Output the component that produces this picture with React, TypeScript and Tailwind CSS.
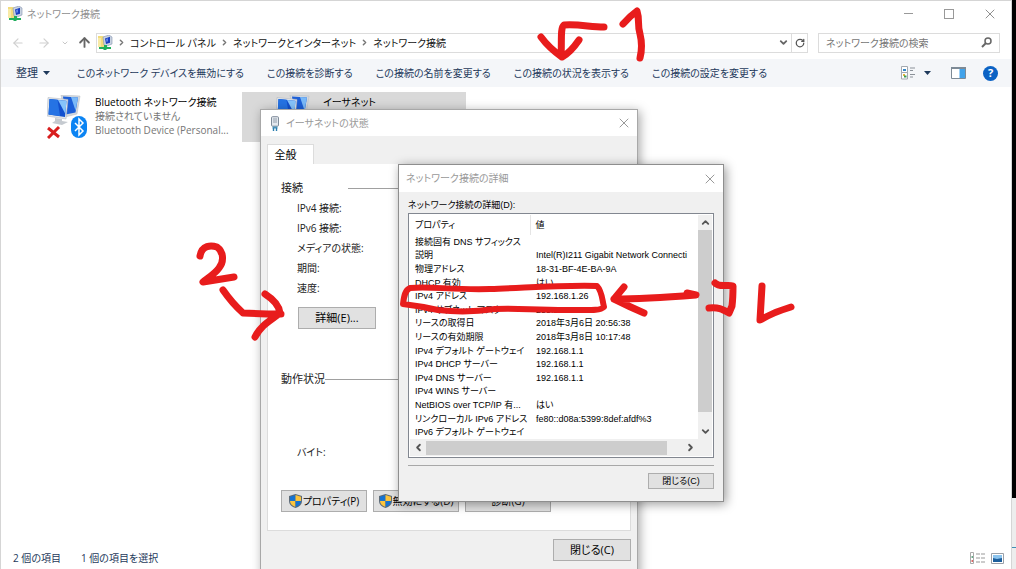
import type { ReactNode } from 'react';
import { ArrowLeft, ArrowRight, ArrowUp, ChevronDown, ChevronLeft, ChevronRight, ChevronUp, RotateCw, X } from 'lucide-react';

const commands = [
  'このネットワーク デバイスを無効にする',
  'この接続を診断する',
  'この接続の名前を変更する',
  'この接続の状況を表示する',
  'この接続の設定を変更する',
];

const crumbs = ['コントロール パネル', 'ネットワークとインターネット', 'ネットワーク接続'];

const statusRows = ['IPv4 接続:', 'IPv6 接続:', 'メディアの状態:', '期間:', '速度:'];

const details = [
  { name: '接続固有 DNS サフィックス', value: '' },
  { name: '説明', value: 'Intel(R)I211 Gigabit Network Connecti' },
  { name: '物理アドレス', value: '18-31-BF-4E-BA-9A' },
  { name: 'DHCP 有効', value: 'はい' },
  { name: 'IPv4 アドレス', value: '192.168.1.26' },
  { name: 'IPv4 サブネット マスク', value: '255.255.255.0' },
  { name: 'リースの取得日', value: '2018年3月6日 20:56:38' },
  { name: 'リースの有効期限', value: '2018年3月8日 10:17:48' },
  { name: 'IPv4 デフォルト ゲートウェイ', value: '192.168.1.1' },
  { name: 'IPv4 DHCP サーバー', value: '192.168.1.1' },
  { name: 'IPv4 DNS サーバー', value: '192.168.1.1' },
  { name: 'IPv4 WINS サーバー', value: '' },
  { name: 'NetBIOS over TCP/IP 有...', value: 'はい' },
  { name: 'リンクローカル IPv6 アドレス', value: 'fe80::d08a:5399:8def:afdf%3' },
  { name: 'IPv6 デフォルト ゲートウェイ', value: '' },
];

function NetworkIcon() {
  return (
    <svg width="15" height="15" viewBox="0 0 15 15" className="shrink-0" aria-hidden="true">
      <path d="M0 1h5l1 1h3v10H0z" fill="#f2dc7c" />
      <path d="M0 3h3v9H0z" fill="#f8eaa6" />
      <path d="M5 2l6-2 3 2v7l-5 2-3-1z" fill="#c9d3e2" stroke="#8391ac" strokeWidth=".6" />
      <path d="M7 3.500l5-1.700v6L8 9z" fill="#1b3fc0" />
      <path d="M8 4l2-.7v3L8.500 7z" fill="#5f86ee" />
      <path d="M6 10h3v2h4v2H9l-1 1H6l-1-1H1v-2h5z" fill="#1fae5c" />
    </svg>
  );
}

function Computers() {
  return (
    <>
      <path d="M14 0l19 1-3 18-12 3z" fill="#d3d8de" stroke="#b4bac2" strokeWidth=".5" />
      <path d="M16 1.500l15 1-2.500 15-10 2z" fill="#1c5fd8" />
      <path d="M24 2l7 .5-2.500 13z" fill="#7ab9f8" />
      <path d="M1 2.500l20 2-2 19.500L0 21z" fill="#e2e6ea" stroke="#aab1ba" strokeWidth=".5" />
      <path d="M2.500 4l17 1.700L18 22 1.500 19.500z" fill="#1250cf" />
      <path d="M2.500 4l8 .8L13 21 1.500 19.500z" fill="#2573e4" />
      <path d="M11 5l8.500.700-1.200 13z" fill="#86c4fb" />
      <path d="M8 23l7 1v2l6 1-6 3-10-2 3-2z" fill="#c5cad0" />
    </>
  );
}

function BluetoothNetworkIcon() {
  return (
    <svg width="42" height="44" viewBox="0 0 42 44" className="shrink-0" aria-hidden="true">
      <Computers />
      <rect x="24" y="21" width="16" height="22" rx="8" fill="#0b84f3" />
      <path d="M28 28l8 8-4 4V24l4 4-8 8" fill="none" stroke="#fff" strokeWidth="1.500" />
      <path d="M1 33l11 9M12 32L1 43" stroke="#d81e1e" strokeWidth="3" />
    </svg>
  );
}

function EthernetIcon() {
  return (
    <svg width="42" height="44" viewBox="0 0 42 44" className="shrink-0" aria-hidden="true">
      <Computers />
    </svg>
  );
}

function PlugIcon() {
  return (
    <svg width="10" height="15" viewBox="0 0 10 15" className="shrink-0" aria-hidden="true">
      <rect x="1.500" y=".7" width="7" height="9.500" rx="1" fill="#e3e8ee" stroke="#7f8b99" />
      <path d="M4 2v5M6 2v5" stroke="#7f8b99" strokeWidth=".8" />
      <path d="M2.500 10.500h5v2h-5z" fill="#4a90b8" />
      <path d="M3.500 12v3M6.500 12v3" stroke="#2b7fb0" strokeWidth="1.400" />
    </svg>
  );
}

function Shield() {
  return (
    <svg width="13" height="14" viewBox="0 0 13 14" className="shrink-0" aria-hidden="true">
      <path d="M6.500 0L13 2v5c0 3.500-3 6-6.500 7C3 13 0 10.500 0 7V2z" fill="#5d6b78" />
      <path d="M6.500 1L1 2.700V7h5.500z" fill="#1673d1" />
      <path d="M6.500 1L12 2.700V7H6.500z" fill="#fcc43c" />
      <path d="M1 7h5.500v6C3.500 12 1 10 1 7z" fill="#fcc43c" />
      <path d="M12 7H6.500v6C9.500 12 12 10 12 7z" fill="#1673d1" />
    </svg>
  );
}

function ViewIcon() {
  return (
    <svg width="15" height="14" viewBox="0 0 15 14" aria-hidden="true">
      <path d="M.5.5h6v6h-6zM.5 6.500h6v6.500h-6z" fill="#fff" stroke="#a3a9b0" />
      <path d="M2 3h3v2H2z" fill="#3286c8" />
      <path d="M2 8h2v2H2z" fill="#e3b53a" />
      <path d="M3 9.500h2.500v2H3z" fill="#3a9c55" />
      <path d="M9 2h5M9 4.500h3M9 8.500h5M9 11h3" stroke="#8b9199" />
    </svg>
  );
}

function PaneIcon() {
  return (
    <svg width="15" height="12" viewBox="0 0 15 12" aria-hidden="true">
      <path d="M.5.5h14v11H.5z" fill="#fff" stroke="#7d8a96" />
      <path d="M0 0h15v2H0z" fill="#7d8a96" />
      <path d="M8.500 2H14v9H8.500z" fill="#41a2ea" />
    </svg>
  );
}

function Caret() {
  return (
    <svg width="7" height="4" viewBox="0 0 7 4" aria-hidden="true">
      <path d="M0 0h7L3.500 4z" fill="#1e395b" />
    </svg>
  );
}

function PushButton({ children, className }: { children: ReactNode; className: string }) {
  return (
    <button className={`flex items-center justify-center whitespace-nowrap border border-[#adadad] bg-[#e1e1e1] text-black ${className}`}>
      {children}
    </button>
  );
}

function Explorer() {
  return (
    <main className="flex min-w-0 flex-1 flex-col border-l border-t border-r border-[#d5d5d5] bg-white">
      <header className="flex h-[25px] items-center pl-[7px] pr-2 text-[#8f8f8f]">
        <NetworkIcon />
        <h1 className="ml-1 flex-1">ネットワーク接続</h1>
        <div className="flex gap-[27px] pr-[6px]">
          <button aria-label="最小化" className="flex w-[14px] items-center justify-center">
            <span className="h-px w-[9px] bg-[#999]"></span>
          </button>
          <button aria-label="最大化" className="flex w-[14px] items-center justify-center">
            <span className="size-[10px] border border-[#999]"></span>
          </button>
          <button aria-label="閉じる" className="flex w-[14px] items-center justify-center">
            <X size={16} strokeWidth={1.5} className="shrink-0" />
          </button>
        </div>
      </header>

      <div className="flex h-8 items-center pl-[10px] pr-[11px] pt-px">
        <button aria-label="戻る" className="text-[#d0d0d0]"><ArrowLeft size={14} strokeWidth={2} /></button>
        <button aria-label="進む" className="ml-3 text-[#d0d0d0]"><ArrowRight size={14} strokeWidth={2} /></button>
        <button aria-label="履歴" className="ml-[10px] text-[#c8c8c8]"><ChevronDown size={8} strokeWidth={3} /></button>
        <button aria-label="上へ" className="ml-[8px] text-[#666]"><ArrowUp size={15} strokeWidth={3} /></button>
        <nav className="ml-1 flex h-5 flex-1 items-center border border-[#dcdcdc] pl-px text-[#111]">
          <NetworkIcon />
          {crumbs.map((c) => (
            <span key={c} className="flex items-center">
              <ChevronRight size={9} strokeWidth={4} className="mx-[4px] text-[#777]" />
              <a href="#">{c}</a>
            </span>
          ))}
          <button aria-label="以前の場所" className="ml-auto mr-[2px] text-[#666]"><ChevronDown size={11} strokeWidth={4} /></button>
          <button aria-label="更新" className="flex h-full w-4 items-center justify-center border-l border-[#dcdcdc] text-[#555]">
            <RotateCw size={10} strokeWidth={3} />
          </button>
        </nav>
        <label className="ml-[10px] flex h-5 w-[182px] items-center border border-[#dcdcdc] px-[7px]">
          <input aria-label="ネットワーク接続の検索" placeholder="ネットワーク接続の検索" className="min-w-0 flex-1 outline-none placeholder:text-[#767676]" />
          <svg width="11" height="11" viewBox="0 0 11 11" aria-hidden="true">
            <circle cx="7" cy="4" r="3" fill="none" stroke="#666" strokeWidth="1.500" />
            <path d="M5 6L1 10" stroke="#666" strokeWidth="2" />
          </svg>
        </label>
      </div>

      <div className="mt-px flex h-7 items-center gap-[23px] bg-[#f4f6f9] pl-[15px] pr-[13px] text-[#1e395b]">
        <button className="mr-1 flex items-center gap-[5px] whitespace-nowrap text-[11px]">整理 <Caret /></button>
        {commands.map((c) => (
          <button key={c} className="whitespace-nowrap">{c}</button>
        ))}
        <div className="ml-auto flex items-center">
          <button aria-label="表示方法の変更"><ViewIcon /></button>
          <button aria-label="その他のオプション" className="ml-2"><Caret /></button>
          <button aria-label="プレビュー ウィンドウ" className="ml-5"><PaneIcon /></button>
          <button aria-label="ヘルプ" className="ml-[17px] flex size-[15px] items-center justify-center rounded-full bg-[#0b62c4] text-[11px] font-bold text-white">?</button>
        </div>
      </div>

      <ul className="flex flex-1 items-start gap-[6px] pl-[11px] pt-[5px]">
        <li className="flex h-[50px] w-[224px] gap-[6px] pl-[35px] pt-[3px]">
          <BluetoothNetworkIcon />
          <div className="leading-[14px] text-[#767676]">
            <p className="text-black">Bluetooth ネットワーク接続</p>
            <p>接続されていません</p>
            <p className="whitespace-nowrap">Bluetooth Device (Personal...</p>
          </div>
        </li>
        <li className="flex h-[50px] w-[224px] gap-[5px] bg-[#d9d9d9] pl-[34px] pt-[3px]">
          <EthernetIcon />
          <p className="leading-[14px] text-black">イーサネット</p>
        </li>
      </ul>

      <footer className="flex h-[22px] items-center pl-3 pr-[7px] text-[#1e395b]">
        <span>2 個の項目</span>
        <span className="ml-5">1 個の項目を選択</span>
        <div className="ml-auto flex items-center gap-[5px]">
          <button aria-label="詳細表示">
            <svg width="16" height="12" viewBox="0 0 16 12" aria-hidden="true">
              <path d="M.5.5h3v11h-3z" fill="#fff" stroke="#aaa" />
              <path d="M6 2h4M11 2h4M6 6h4M11 6h4M6 10h4M11 10h4" stroke="#999" />
              <path d="M1.500 8h1.500v2H1.500z" fill="#d66" />
              <path d="M1.500 4h1.500v2H1.500z" fill="#6a8" />
            </svg>
          </button>
          <button aria-label="大きい縮小表示">
            <svg width="13" height="11" viewBox="0 0 13 11" aria-hidden="true">
              <path d="M.5.5h12v10H.5z" fill="#fff" stroke="#9aa0a8" />
              <path d="M2 2h9v7H2z" fill="#8cc4ee" />
              <path d="M2 5l4 1 5-1v4H2z" fill="#1d5f9c" />
            </svg>
          </button>
        </div>
      </footer>
    </main>
  );
}

function StatusDialog() {
  return (
    <section className="absolute left-[260px] top-[109px] w-[378px] border border-[#a8a8a8] bg-[#f0f0f0] pb-5 text-[11px] text-[#222] shadow-[2px_2px_10px_rgba(0,0,0,0.35)]">
      <header className="flex h-[26px] items-center bg-white pl-[9px] pr-[5px] text-[10px] text-[#999]">
        <PlugIcon />
        <h2 className="ml-[6px] flex-1">イーサネットの状態</h2>
        <button aria-label="閉じる"><X size={16} strokeWidth={1.5} /></button>
      </header>
      <div className="px-[6px] pt-2">
        <button role="tab" aria-selected="true" className="block h-5 w-[47px] border border-b-0 border-[#dcdcdc] bg-white pr-[10px] text-black">全般</button>
        <div className="flex h-[367px] flex-col border border-t-0 border-[#dcdcdc] bg-white px-[13px]">
          <div className="mt-4 flex h-4 items-center">
            <h3 className="w-[67px]">接続</h3>
            <span className="h-px flex-1 bg-[#a0a0a0]"></span>
          </div>
          <ul className="mt-[2px] pl-4 leading-5 text-[10px]">
            {statusRows.map((r) => (
              <li key={r} className="h-5">{r}</li>
            ))}
          </ul>
          <PushButton className="ml-[17px] mt-[9px] h-[22px] w-[78px]">詳細(E)...</PushButton>
          <div className="mt-[42px] flex h-4 items-center">
            <h3>動作状況</h3>
            <span className="h-px flex-1 bg-[#a0a0a0]"></span>
          </div>
          <p className="mt-[57px] h-4 pl-4 text-[10px] leading-4">バイト:</p>
          <div className="mt-[30px] flex gap-[6px] text-[10px]">
            <PushButton className="h-[22px] w-[86px] gap-px"><Shield />プロパティ(P)</PushButton>
            <PushButton className="h-[22px] w-[86px] gap-px"><Shield />無効にする(D)</PushButton>
            <PushButton className="h-[22px] w-[86px]">診断(G)</PushButton>
          </div>
        </div>
        <div className="mt-2 flex justify-end">
          <PushButton className="h-[22px] w-[78px]">閉じる(C)</PushButton>
        </div>
      </div>
    </section>
  );
}

function DetailsDialog() {
  return (
    <section className="absolute left-[398px] top-[164px] w-[326px] border border-[#8e8e8e] bg-[#f0f0f0] pb-3 font-['Liberation_Sans','Noto_Sans_CJK_JP',sans-serif] text-[9px] text-black shadow-[2px_2px_10px_rgba(0,0,0,0.4)]">
      <header className="flex h-[27px] items-center bg-white pl-[7px] pr-[5px] text-[10px] text-[#999]">
        <h2 className="flex-1">ネットワーク接続の詳細</h2>
        <button aria-label="閉じる"><X size={16} strokeWidth={1.5} /></button>
      </header>
      <div className="px-[9px] pt-[6px]">
        <p className="h-[15px] leading-[15px]">ネットワーク接続の詳細(D):</p>
        <div className="h-[245px] border border-[#828790] bg-white p-px">
          <div className="flex">
            <div className="min-w-0 flex-1 overflow-hidden">
              <table className="w-full table-fixed border-collapse text-left leading-3">
                <thead>
                  <tr className="h-5">
                    <th className="w-[120px] border-r border-[#e5e5e5] p-0 pl-[5px] font-normal">プロパティ</th>
                    <th className="p-0 pl-[5px] font-normal">値</th>
                  </tr>
                </thead>
              </table>
              <table className="h-[204px] w-full table-fixed border-collapse text-left leading-3">
                <tbody>
                  {details.map((d) => (
                    <tr key={d.name}>
                      <td className="w-[121px] whitespace-nowrap p-0 pl-[5px]">{d.name}</td>
                      <td className="whitespace-nowrap p-0 pl-[5px]">{d.value}</td>
                    </tr>
                  ))}
                </tbody>
              </table>
            </div>
            <div className="flex w-[14px] flex-col items-center bg-[#f0f0f0] text-[#555]">
              <button aria-label="上へスクロール" className="flex h-[15px] items-center"><ChevronUp size={11} strokeWidth={4} /></button>
              <span className="h-[182px] w-full bg-[#cdcdcd]"></span>
              <button aria-label="下へスクロール" className="mt-auto flex h-[15px] items-center"><ChevronDown size={11} strokeWidth={4} /></button>
            </div>
          </div>
          <div className="flex h-[17px] items-center bg-[#f0f0f0] text-[#555]">
            <button aria-label="左へスクロール" className="flex w-4 justify-center"><ChevronLeft size={11} strokeWidth={4} /></button>
            <span className="h-[14px] w-[241px] bg-[#cdcdcd]"></span>
            <button aria-label="右へスクロール" className="ml-auto mr-[14px] flex w-[15px] justify-center"><ChevronRight size={11} strokeWidth={4} /></button>
          </div>
        </div>
        <hr className="mt-[7px] border-[#a8a8a8]" />
        <div className="mt-[7px] flex justify-end">
          <PushButton className="h-4 w-[66px]">閉じる(C)</PushButton>
        </div>
      </div>
    </section>
  );
}

// hand-drawn steps over the windows
function Marker() {
  return (
    <svg
      width="1016"
      height="569"
      viewBox="0 0 1016 569"
      className="pointer-events-none absolute left-0 top-0"
      fill="none"
      stroke="#e81c1c"
      strokeWidth="7"
      strokeLinecap="round"
      strokeLinejoin="round"
      aria-hidden="true"
    >
      <path d="M604 27C590 27 580 24 564 25C560 28 562 42 561 56M541 37Q549 48 562 57Q570 53 579 40" />
      <path d="M623 24Q630 16 637 11C640 20 637 24 640 34Q643 46 640 58" />
      <path d="M200 256C202 245 211 245 217 247C224 252 224 262 219 268C214 275 207 278 203 282L234 277" />
      <path d="M223 290Q232 303 243 313Q262 314 281 314M265 294Q279 303 280 313C270 321 261 325 255 337" />
      <path
        d="M403 304C404 296 405 290 410 288C430 286 450 290 490 289C525 288 560 285 597 286C602 291 602 299 604 307C600 311 590 310 567 310C530 310 520 308 495 309C475 312 455 312 438 310Q420 306 403 304"
        strokeWidth="6"
      />
      <path d="M687 293L696 295C670 297 640 299 614 299M624 287L614 299Q630 307 644 313" />
      <path d="M715 283C720 288 727 284 733 286Q733 298 732 306L729 313C722 309 718 307 709 308" />
      <path d="M762 286L760 320Q774 312 791 307" />
    </svg>
  );
}

export default function App() {
  return (
    <div className="relative flex min-h-screen overflow-hidden font-['Open_Sans','Noto_Sans_CJK_JP',sans-serif] text-[10px] leading-4 [font-feature-settings:'palt']">
      <Explorer />
      <aside className="flex w-1 flex-col bg-black">
        <div className="mt-auto h-[71px] bg-[#ededed] pt-[40px]">
          <span className="block h-[10px] border-b border-[#3f8db5]"></span>
        </div>
      </aside>
      <StatusDialog />
      <DetailsDialog />
      <Marker />
    </div>
  );
}
